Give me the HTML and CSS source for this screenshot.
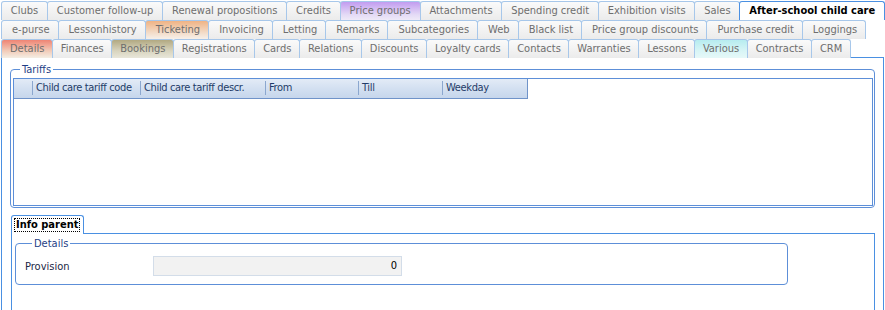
FILE: index.html
```html
<!DOCTYPE html>
<html lang="en">
<head>
    <meta charset="UTF-8">
    <title>After-school child care</title>
    <link rel="stylesheet" href="styles.css">
</head>
<body>
    <div class="tabstrip">
        <div class="tab-row row-fill">
            <div class="tab">Clubs</div>
            <div class="tab">Customer follow-up</div>
            <div class="tab">Renewal propositions</div>
            <div class="tab">Credits</div>
            <div class="tab tab-purple">Price groups</div>
            <div class="tab">Attachments</div>
            <div class="tab">Spending credit</div>
            <div class="tab">Exhibition visits</div>
            <div class="tab">Sales</div>
            <div class="tab active">After-school child care</div>
        </div>
        <div class="tab-row row-mid">
            <div class="tab">e-purse</div>
            <div class="tab">Lessonhistory</div>
            <div class="tab tab-orange">Ticketing</div>
            <div class="tab">Invoicing</div>
            <div class="tab">Letting</div>
            <div class="tab">Remarks</div>
            <div class="tab">Subcategories</div>
            <div class="tab">Web</div>
            <div class="tab">Black list</div>
            <div class="tab">Price group discounts</div>
            <div class="tab">Purchase credit</div>
            <div class="tab">Loggings</div>
        </div>
        <div class="tab-row row-low">
            <div class="tab tab-red">Details</div>
            <div class="tab">Finances</div>
            <div class="tab tab-olive">Bookings</div>
            <div class="tab">Registrations</div>
            <div class="tab">Cards</div>
            <div class="tab">Relations</div>
            <div class="tab">Discounts</div>
            <div class="tab">Loyalty cards</div>
            <div class="tab">Contacts</div>
            <div class="tab">Warranties</div>
            <div class="tab">Lessons</div>
            <div class="tab tab-cyan">Various</div>
            <div class="tab">Contracts</div>
            <div class="tab">CRM</div>
        </div>
    </div>

    <div class="page">
        <fieldset class="group tariffs">
            <legend>Tariffs</legend>
            <div class="grid">
                <div class="grid-head">
                    <div class="col col-sel"></div>
                    <div class="col col-code">Child care tariff code</div>
                    <div class="col col-descr">Child care tariff descr.</div>
                    <div class="col col-from">From</div>
                    <div class="col col-till">Till</div>
                    <div class="col col-day">Weekday</div>
                </div>
            </div>
        </fieldset>

        <div class="subtabs">
            <div class="subtab"><span class="focus">Info parent</span></div>
        </div>
        <div class="subpage">
            <fieldset class="group details">
                <legend>Details</legend>
                <div class="field">
                    <label>Provision</label>
                    <div class="input">0</div>
                </div>
            </fieldset>
        </div>
    </div>
</body>
</html>
```

FILE: styles.css
```css
* {
    box-sizing: border-box;
}

body {
    margin: 0;
    height: 310px;
    overflow: hidden;
    background: #fff;
    font-family: "DejaVu Sans", Verdana, sans-serif;
    font-stretch: condensed;
    font-size: 11px;
}

/* bovenste tabbladen */
.tabstrip {
    padding: 1px 0 0 1px;
}

.tab-row {
    display: flex;
    height: 19px;
}

.row-fill {
    width: 883px;
}

.row-fill .tab {
    flex: 1 1 auto;
    text-align: center;
}

.tab {
    height: 19px;
    padding: 0 7px;
    margin-right: -1px;
    border: 1px solid #a7c7ea;
    border-bottom: none;
    border-radius: 3px 3px 0 0;
    background: linear-gradient(#fafafa, #ebebeb);
    color: #6e6e6e;
    line-height: 18px;
    white-space: nowrap;
}

.row-mid .tab {
    padding: 0 8px 0 10px;
}

.row-low .tab {
    padding: 0 7.5px 0 8px;
}

.tab.active {
    background: #fff;
    color: #000;
    font-weight: bold;
    border-color: #4a90e2;
}

.tab-purple {
    background: linear-gradient(#c29cf0, #e4daf6 70%, #efeaf8);
}

.tab-orange {
    background: linear-gradient(#efb384, #f3dcc8 65%, #f6f0ea);
}

.tab-red {
    background: linear-gradient(#ef8474, #f2cbb8 60%, #f4eee4);
}

.tab-olive {
    background: linear-gradient(#b2a982, #d8d4be 60%, #e8e6da);
}

.tab-cyan {
    background: linear-gradient(#b6ecef, #d8f5f6 60%, #e6f8f8);
}

/* inhoud */
.page {
    margin: -1px 0 0 1px;
    width: 883px;
    height: 260px;
    border: 1px solid #4a90e2;
    border-bottom: none;
}

.group {
    margin: 0;
    padding: 0;
    min-width: 0;
    border: 1px solid #5d8fd8;
    border-radius: 4px;
}

.group legend {
    margin-left: 7px;
    padding: 0 2px;
    color: #1f3f86;
    line-height: 13px;
}

.tariffs {
    margin: 5px 8px 0 8px;
    padding: 2px 1px 1px 2px;
}

.grid {
    height: 128px;
    border: 1px solid #5d8fd8;
}

.grid-head {
    display: flex;
    width: 514px;
    height: 20px;
    border-right: 1px solid #6f93c9;
    border-bottom: 1px solid #6f93c9;
    background: linear-gradient(#e3ebf6, #d3e0f1 50%, #c6d6ec);
    color: #1f3c68;
    letter-spacing: -0.35px;
}

.col {
    margin: 2px 0 3px;
    padding-left: 3px;
    border-right: 1px solid #8ba7cf;
    line-height: 14px;
    white-space: nowrap;
    overflow: hidden;
}

.col-sel {
    width: 19px;
}

.col-code {
    width: 108px;
}

.col-descr {
    width: 125px;
}

.col-from {
    width: 93px;
}

.col-till {
    width: 84px;
}

.col-day {
    width: 84px;
    border-right: none;
}

/* info ouder */
.subtabs {
    display: flex;
    margin: 7px 0 0 9px;
}

.subtab {
    position: relative;
    z-index: 1;
    width: 73px;
    height: 19px;
    margin-bottom: -1px;
    padding: 2px 0 0 2px;
    border: 1px solid #4a90e2;
    border-bottom: none;
    border-radius: 3px 3px 0 0;
    background: #fff;
    font-weight: bold;
    color: #000;
}

.focus {
    display: inline-block;
    padding: 0 1px;
    border: 1px dotted #000;
    line-height: 12px;
}

.subpage {
    height: 80px;
    margin: 0 8px 0 9px;
    border: 1px solid #4a90e2;
    border-bottom: none;
}

.details {
    width: 773px;
    margin: 3px 0 0 3px;
    padding: 6px 0 8px 9px;
}

.field {
    display: flex;
    align-items: center;
}

.field label {
    width: 128px;
    color: #1c2745;
}

.input {
    width: 249px;
    height: 20px;
    padding-right: 4px;
    border: 1px solid #d3dde9;
    background: #f2f2f2;
    color: #000;
    text-align: right;
    line-height: 18px;
}
```
